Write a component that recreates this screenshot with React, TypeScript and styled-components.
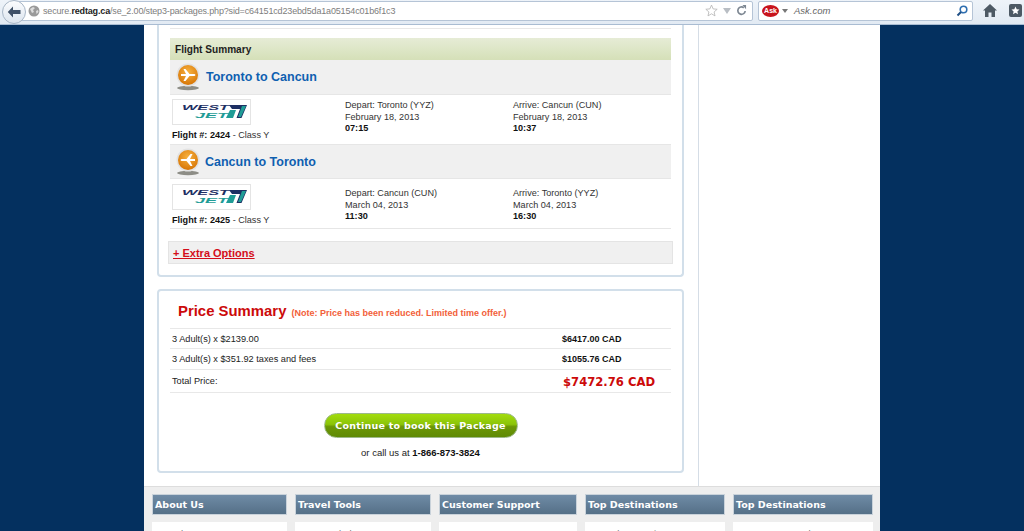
import React from 'react';
import styled, { createGlobalStyle } from 'styled-components';

const GlobalStyle = createGlobalStyle`
  html, body {
    margin: 0;
    padding: 0;
    height: 100%;
    overflow: hidden;
    background: #04305f;
    font-family: "Liberation Sans", Arial, sans-serif;
  }
`;

const Window = styled.div`
  width: 1024px;
  height: 531px;
  display: flex;
  flex-direction: column;
  overflow: hidden;
`;

const BrowserBar = styled.div`
  flex: none;
  height: 25px;
  box-sizing: border-box;
  display: flex;
  align-items: center;
  background: linear-gradient(#eef3f9, #e2eaf3);
  border-bottom: 1px solid #a9bcd2;
  position: relative;
`;

const BackButton = styled.div`
  position: absolute;
  left: 2px;
  top: 0;
  width: 22px;
  height: 22px;
  border-radius: 50%;
  background: linear-gradient(#fbfcfe, #dde5ee);
  border: 1px solid #a8b6c6;
  display: flex;
  align-items: center;
  justify-content: center;
  z-index: 1;
`;

const UrlBar = styled.div`
  margin-left: 14px;
  width: 739px;
  height: 20px;
  box-sizing: border-box;
  margin-top: -3px;
  background: #fff;
  border: 1px solid #b5c4d6;
  border-radius: 2px;
  display: flex;
  align-items: center;
  padding-left: 13px;
  gap: 3px;
`;

const UrlText = styled.span`
  flex: 1;
  font-size: 9px;
  letter-spacing: -0.16px;
  color: #7d7d7d;
  white-space: nowrap;
  b {
    color: #222;
    font-weight: 700;
  }
`;

const UrlTools = styled.span`
  display: flex;
  align-items: center;
  gap: 5px;
  padding-right: 5px;
`;

const SearchBar = styled.div`
  margin-left: 5px;
  width: 215px;
  height: 20px;
  box-sizing: border-box;
  margin-top: -3px;
  background: #fff;
  border: 1px solid #b5c4d6;
  border-radius: 2px;
  display: flex;
  align-items: center;
  padding: 0 4px 0 3px;
  gap: 3px;
`;

const SearchText = styled.span`
  flex: 1;
  font-size: 9.5px;
  font-style: italic;
  color: #666;
  padding-left: 3px;
`;

const AskBadge = styled.span`
  width: 17px;
  height: 12px;
  border-radius: 50%;
  background: #c8141c;
  color: #fff;
  font-size: 7px;
  font-weight: 700;
  text-align: center;
  line-height: 12px;
`;

const BarIcons = styled.div`
  display: flex;
  align-items: center;
  gap: 12px;
  margin: -3px 0 0 10px;
`;

const PageArea = styled.div`
  flex: 1;
  min-height: 0;
  display: flex;
  justify-content: center;
  background: #04305f;
`;

const Page = styled.div`
  width: 736px;
  background: #fff;
  display: flex;
  flex-direction: column;
`;

const Columns = styled.div`
  flex: none;
  height: 461px;
  display: flex;
`;

const MainColumn = styled.div`
  width: 555px;
  box-sizing: border-box;
  border-right: 1px solid #d5dde6;
  padding-left: 13px;
`;

const Card = styled.section<{ $open?: boolean }>`
  width: 527px;
  box-sizing: border-box;
  background: #fff;
  border: 2px solid #d2dfea;
  border-radius: 4px;
  padding: 0 11px;
  ${(p) => (p.$open ? 'border-top: none; border-top-left-radius: 0; border-top-right-radius: 0;' : '')}
`;

const FlightCard = styled(Card)`
  height: 252px;
  padding-top: 3px;
  margin-bottom: 12px;
`;

const TopRule = styled.div`
  height: 1px;
  background: #e8e8e8;
  margin-bottom: 9px;
`;

const SummaryHead = styled.div`
  height: 22px;
  line-height: 23px;
  padding-left: 5px;
  background: linear-gradient(#e6ecd6, #d5e0b8);
  font-size: 10.1px;
  font-weight: 700;
  color: #1d1d1d;
`;

const RouteRow = styled.div<{ $gap: number; $h: number }>`
  display: flex;
  align-items: center;
  box-sizing: border-box;
  background: #f0f0f0;
  border-bottom: 1px solid #e6e6e6;
  padding-left: 5px;
  gap: ${(p) => p.$gap}px;
  height: ${(p) => p.$h}px;
`;

const RouteTitle = styled.h3`
  margin: 0;
  font-size: 12.5px;
  font-weight: 700;
  color: #0f5fb0;
`;

const Segment = styled.div<{ $top: number }>`
  display: grid;
  grid-template-columns: 173px 168px 1fr;
  height: 50px;
  border-bottom: 1px solid #e6e6e6;
  padding: ${(p) => p.$top}px 0 0 2px;
  box-sizing: border-box;
`;

const LogoBox = styled.div`
  width: 79px;
  height: 26px;
  box-sizing: border-box;
  border: 1px solid #e4e4e4;
  display: flex;
  align-items: center;
  justify-content: center;
`;

const FlightNo = styled.div`
  margin-top: 5px;
  font-size: 9.1px;
  color: #333;
  b {
    color: #111;
  }
`;

const Stop = styled.div<{ $top: number }>`
  font-size: 9.1px;
  line-height: 11.5px;
  color: #333;
  padding-top: ${(p) => p.$top}px;
  b {
    display: block;
    color: #111;
  }
`;

const ExtraBar = styled.div`
  margin: 12px -2px 0 -2px;
  height: 23px;
  box-sizing: border-box;
  background: #f0f0f0;
  border: 1px solid #e4e4e4;
  padding-left: 4px;
  line-height: 22px;
  font-size: 11px;
  font-weight: 700;
`;

const ExtraLink = styled.a`
  color: #d40d1a;
  text-decoration: underline;
`;

const PriceCard = styled(Card)`
  height: 184px;
`;

const PriceHeading = styled.div`
  height: 37px;
  box-sizing: border-box;
  padding: 12px 0 0 8px;
  display: flex;
  align-items: baseline;
  gap: 5px;
`;

const PriceTitle = styled.h2`
  margin: 0;
  font-size: 14.9px;
  font-weight: 700;
  color: #cc0a0a;
`;

const PriceNote = styled.span`
  font-size: 9px;
  font-weight: 700;
  color: #f2603a;
`;

const PriceRow = styled.div<{ $h: number }>`
  display: grid;
  grid-template-columns: 390px 1fr;
  align-items: center;
  height: ${(p) => p.$h}px;
  box-sizing: border-box;
  border-top: 1px solid #e8e8e8;
  padding-left: 2px;
  font-size: 9.2px;
  color: #222;
`;

const PriceAmount = styled.span`
  font-size: 9px;
  font-weight: 700;
  color: #111;
`;

const TotalAmount = styled.span`
  font-family: "DejaVu Sans", sans-serif;
  font-size: 11.6px;
  font-weight: 700;
  color: #cc0a0a;
  padding: 1px 0 0 1px;
`;

const RowsEnd = styled.div`
  height: 1px;
  background: #e8e8e8;
`;

const Actions = styled.div`
  display: flex;
  flex-direction: column;
  align-items: center;
  padding: 20px 0 0 0;
`;

const BookButton = styled.button`
  width: 194px;
  height: 25px;
  border: 1px solid #9db98a;
  border-radius: 13px;
  padding: 0;
  background: linear-gradient(#a2dc0c, #8bc409 45%, #6c9706 55%, #5f8a05);
  color: #fff;
  font-family: "DejaVu Sans", sans-serif;
  font-size: 9.5px;
  font-weight: 700;
  letter-spacing: 0.24px;
`;

const CallLine = styled.div`
  margin-top: 9px;
  font-size: 9.5px;
  color: #222;
  b {
    color: #111;
  }
`;

const SideColumn = styled.div`
  flex: 1;
`;

const Footer = styled.footer`
  flex: 1;
  min-height: 0;
  overflow: hidden;
  background: #eee;
  border-top: 1px solid #ddd;
  box-sizing: border-box;
  padding: 7px 8px 0;
  display: grid;
  grid-template-columns: 135px 136px 138px 140px 140px;
  column-gap: 8px;
  align-items: start;
`;

const FooterTitle = styled.h4`
  margin: 0;
  height: 21px;
  box-sizing: border-box;
  border: 1px solid #c9d2da;
  background: linear-gradient(#6f8ba6, #557087);
  color: #fff;
  font-family: "DejaVu Sans", sans-serif;
  font-size: 9.5px;
  font-weight: 700;
  line-height: 20px;
  padding-left: 2px;
`;

const FooterBody = styled.div`
  margin-top: 7px;
  height: 40px;
  background: #fff;
  padding: 6px 0 0 20px;
  font-size: 9.5px;
  color: #777;
`;

const Plane: React.FC<{ flip?: boolean }> = ({ flip }) => (
  <svg width="26" height="28" viewBox="0 0 26 28">
    <defs>
      <radialGradient id={flip ? 'orbB' : 'orbA'} cx="50%" cy="35%" r="65%">
        <stop offset="0" stopColor="#f8b340" />
        <stop offset="1" stopColor="#d77606" />
      </radialGradient>
    </defs>
    <ellipse cx="13" cy="25" rx="11" ry="2.2" fill="#8d8d86" />
    <circle cx="13" cy="12" r="11.5" fill="#e2e2e2" />
    <circle cx="13" cy="12" r="10" fill={`url(#${flip ? 'orbB' : 'orbA'})`} />
    <path
      transform={flip ? 'rotate(180 13 12)' : undefined}
      d="M6 11h5L8.500 6h2l4 5h4c1.200 0 2 .5 2 1s-.8 1-2 1h-4l-4 5h-2L11 13H6z"
      fill="#fff"
    />
  </svg>
);

const Logo: React.FC = () => (
  <LogoBox>
    <svg width="72" height="22" viewBox="0 0 72 22">
      <text
        x="6"
        y="9"
        fontFamily="Liberation Sans"
        fontSize="7.5"
        fontWeight="700"
        fontStyle="italic"
        fill="#1d2f63"
        textLength="47"
        lengthAdjust="spacingAndGlyphs"
      >
        WEST
      </text>
      <text
        x="19"
        y="17"
        fontFamily="Liberation Sans"
        fontSize="7.5"
        fontWeight="700"
        fontStyle="italic"
        fill="#1f9c96"
        textLength="33"
        lengthAdjust="spacingAndGlyphs"
      >
        JET
      </text>
      <path d="M53 4h18l-5.500 13h-5l3.500-9h-8z" fill="#1d2f63" />
      <path d="M54 9h6l-3 8h-7z" fill="#1f9c96" />
      <path d="M66 5h4l-5 11h-3z" fill="#1f9c96" />
    </svg>
  </LogoBox>
);

const flights = [
  {
    route: 'Toronto to Cancun',
    flip: false,
    number: '2424',
    depart: 'Depart: Toronto (YYZ)',
    arrive: 'Arrive: Cancun (CUN)',
    departDate: 'February 18, 2013',
    arriveDate: 'February 18, 2013',
    departTime: '07:15',
    arriveTime: '10:37',
    routeHeight: 35,
    top: 4,
    stopTop: 1,
  },
  {
    route: 'Cancun to Toronto',
    flip: true,
    number: '2425',
    depart: 'Depart: Cancun (CUN)',
    arrive: 'Arrive: Toronto (YYZ)',
    departDate: 'March 04, 2013',
    arriveDate: 'March 04, 2013',
    departTime: '11:30',
    arriveTime: '16:30',
    routeHeight: 34,
    top: 5,
    stopTop: 4,
  },
];

const footerColumns = [
  { title: 'About Us', first: 'Who We Are' },
  { title: 'Travel Tools', first: 'Travel Alerts' },
  { title: 'Customer Support', first: 'Contact Us' },
  { title: 'Top Destinations', first: 'Cuba Vacations' },
  { title: 'Top Destinations', first: 'Cancun Hotels' },
];

const App: React.FC = () => (
  <Window>
    <GlobalStyle />
    <BrowserBar>
      <BackButton>
        <svg width="14" height="12" viewBox="0 0 14 12">
          <path d="M6 0.5L0.8 6 6 11.500V8h7.500V4H6z" fill="#3f5066" />
        </svg>
      </BackButton>
      <UrlBar>
        <svg width="12" height="12" viewBox="0 0 12 12">
          <circle cx="6" cy="6" r="5.500" fill="#9a9a9a" />
          <path d="M2 4l3-2 2 1-2 2 1 2-2 1zM8 6l2-1 .5 2-2 2z" fill="#dcdcdc" />
        </svg>
        <UrlText>
          secure.<b>redtag.ca</b>/se_2.00/step3-packages.php?sid=c64151cd23ebd5da1a05154c01b6f1c3
        </UrlText>
        <UrlTools>
          <svg width="13" height="13" viewBox="0 0 24 24">
            <path d="M12 2l3 7 7.500.7-5.700 5 1.700 7.300-6.500-3.900L5.500 22l1.700-7.300-5.700-5L9 9z" fill="#fff" stroke="#b4b4b4" strokeWidth="1.500" />
          </svg>
          <svg width="8" height="6" viewBox="0 0 8 6">
            <path d="M0 0h8L4 6z" fill="#b9bec4" />
          </svg>
          <svg width="11" height="11" viewBox="0 0 12 12">
            <path d="M10 6.500A4 4 0 1 1 8.500 3" fill="none" stroke="#7d8792" strokeWidth="1.800" />
            <path d="M7 0l4 0v4.500z" fill="#7d8792" />
          </svg>
        </UrlTools>
      </UrlBar>
      <SearchBar>
        <AskBadge>Ask</AskBadge>
        <svg width="6" height="4" viewBox="0 0 6 4">
          <path d="M0 0h6L3 4z" fill="#777" />
        </svg>
        <SearchText>Ask.com</SearchText>
        <svg width="12" height="12" viewBox="0 0 12 12">
          <circle cx="7.500" cy="4.500" r="3.300" fill="none" stroke="#2f6fb0" strokeWidth="1.600" />
          <path d="M5 7l-3.500 3.500" stroke="#1f4f85" strokeWidth="2" />
        </svg>
      </SearchBar>
      <BarIcons>
        <svg width="14" height="13" viewBox="0 0 14 13">
          <path d="M7 0L0 6.500h2V13h3.500V8.500h3V13H12V6.500h2z" fill="#4d5964" />
        </svg>
        <svg width="13" height="13" viewBox="0 0 13 13">
          <rect width="13" height="13" rx="2" fill="#4d5964" />
          <path d="M6.500 2.500l1.200 2.700 2.800.3-2.100 1.900.6 2.900-2.500-1.500-2.500 1.500.6-2.900-2.100-1.900 2.800-.3z" fill="#fff" />
        </svg>
      </BarIcons>
    </BrowserBar>
    <PageArea>
      <Page>
        <Columns>
          <MainColumn>
            <FlightCard $open>
              <TopRule />
              <SummaryHead>Flight Summary</SummaryHead>
              {flights.map((f) => (
                <React.Fragment key={f.number}>
                  <RouteRow $gap={f.flip ? 4 : 5} $h={f.routeHeight}>
                    <Plane flip={f.flip} />
                    <RouteTitle>{f.route}</RouteTitle>
                  </RouteRow>
                  <Segment $top={f.top}>
                    <div>
                      <Logo />
                      <FlightNo>
                        <b>Flight #: {f.number}</b> - Class Y
                      </FlightNo>
                    </div>
                    <Stop $top={f.stopTop}>
                      {f.depart}
                      <br />
                      {f.departDate}
                      <b>{f.departTime}</b>
                    </Stop>
                    <Stop $top={f.stopTop}>
                      {f.arrive}
                      <br />
                      {f.arriveDate}
                      <b>{f.arriveTime}</b>
                    </Stop>
                  </Segment>
                </React.Fragment>
              ))}
              <ExtraBar>
                <ExtraLink>+ Extra Options</ExtraLink>
              </ExtraBar>
            </FlightCard>
            <PriceCard>
              <PriceHeading>
                <PriceTitle>Price Summary</PriceTitle>
                <PriceNote>(Note: Price has been reduced. Limited time offer.)</PriceNote>
              </PriceHeading>
              <PriceRow $h={20}>
                <span>3 Adult(s) x $2139.00</span>
                <PriceAmount>$6417.00 CAD</PriceAmount>
              </PriceRow>
              <PriceRow $h={21}>
                <span>3 Adult(s) x $351.92 taxes and fees</span>
                <PriceAmount>$1055.76 CAD</PriceAmount>
              </PriceRow>
              <PriceRow $h={23}>
                <span>Total Price:</span>
                <TotalAmount>$7472.76 CAD</TotalAmount>
              </PriceRow>
              <RowsEnd />
              <Actions>
                <BookButton>Continue to book this Package</BookButton>
                <CallLine>
                  or call us at <b>1-866-873-3824</b>
                </CallLine>
              </Actions>
            </PriceCard>
          </MainColumn>
          <SideColumn />
        </Columns>
        <Footer>
          {footerColumns.map((c, i) => (
            <div key={i}>
              <FooterTitle>{c.title}</FooterTitle>
              <FooterBody>{c.first}</FooterBody>
            </div>
          ))}
        </Footer>
      </Page>
    </PageArea>
  </Window>
);

export default App;
